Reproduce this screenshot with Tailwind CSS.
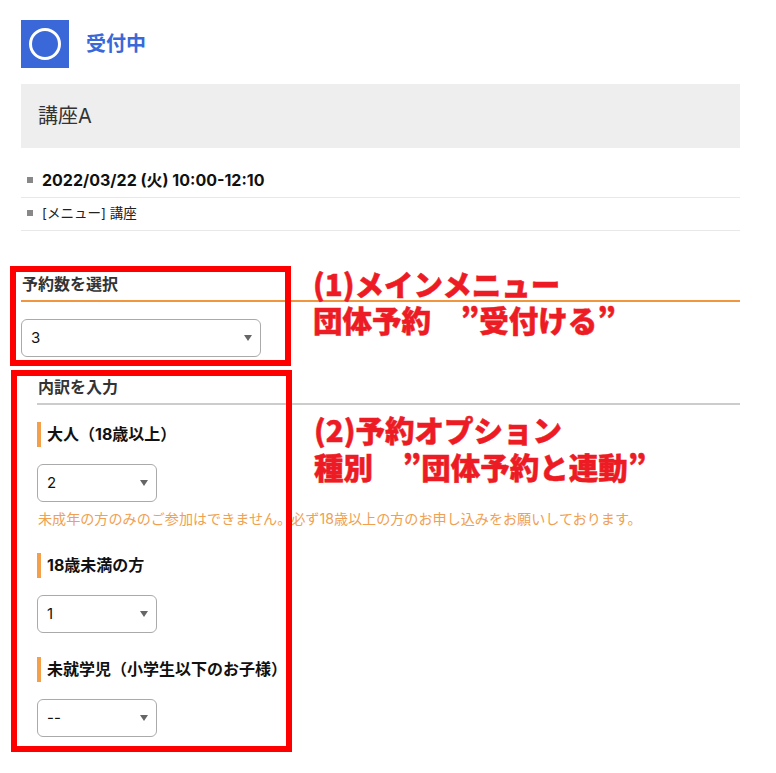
<!DOCTYPE html>
<html lang="ja">
<head>
    <meta charset="UTF-8">
    <meta name="viewport" content="width=device-width, initial-scale=1.0">
    <title>予約</title>
    <script src="https://cdn.jsdelivr.net/npm/@tailwindcss/browser@4"></script>
</head>
<body class="bg-white font-['Inter','Noto_Sans_CJK_JP',sans-serif] text-[#111]">
    <div class="relative h-[773px] overflow-hidden pl-[21px] pr-[36px] pt-[20px]">

        <!-- status -->
        <div class="flex items-center gap-[17px]">
            <div class="flex h-[48px] w-[48px] items-center justify-center bg-[#3a68d8]">
                <div class="h-[32px] w-[32px] rounded-full border-[3px] border-white"></div>
            </div>
            <span class="text-[20px] font-bold text-[#3a68d8]">受付中</span>
        </div>

        <h1 class="mt-[16px] flex h-[64px] items-center bg-[#eeeeee] pl-[17px] text-[20px] text-[#333]">講座A</h1>

        <ul class="mt-[15px]">
            <li class="flex h-[35px] items-center border-b border-[#e8e8e8] pb-[1px] pl-[6px] text-[16px] font-bold">
                <span class="mr-[9px] h-[6px] w-[6px] bg-[#888]"></span>2022/03/22 (火) 10:00-12:10
            </li>
            <li class="flex h-[33px] items-center border-b border-[#e8e8e8] pb-[2px] pl-[6px] text-[13.5px] text-[#222]">
                <span class="mr-[9px] h-[6px] w-[6px] bg-[#888]"></span>[メニュー] 講座
            </li>
        </ul>

        <!-- party size -->
        <h2 class="mt-[41px] h-[30px] border-b-2 border-[#f0963f] pl-[1px] text-[16px] leading-[24px] font-bold text-[#333]">予約数を選択</h2>
        <div class="relative mt-[17px] h-[38px] w-[240px]">
            <select class="h-full w-full appearance-none rounded-[6px] border border-[#aaa] bg-white pl-[9px] text-[15px] text-[#111]"><option>3</option></select>
            <span class="absolute right-[9px] top-[16px] h-0 w-0 border-x-[4px] border-t-[6px] border-x-transparent border-t-[#666]"></span>
        </div>

        <!-- breakdown -->
        <div class="mt-[18px] pl-[16px]">
            <h2 class="h-[30px] border-b-2 border-[#ccc] pl-[1px] text-[16px] leading-[24px] font-bold text-[#333]">内訳を入力</h2>

            <h3 class="mt-[17px] flex h-[25px] items-center border-l-[4px] border-[#f4a04a] pb-[2px] pl-[6px] text-[16px] font-bold">大人（18歳以上）</h3>
            <div class="relative mt-[17px] h-[38px] w-[120px]">
                <select class="h-full w-full appearance-none rounded-[6px] border border-[#aaa] bg-white pl-[9px] text-[15px] text-[#111]"><option>2</option></select>
                <span class="absolute right-[9px] top-[16px] h-0 w-0 border-x-[4px] border-t-[6px] border-x-transparent border-t-[#666]"></span>
            </div>
            <p class="mt-[8px] h-[18px] whitespace-nowrap pl-[1px] text-[14.1px] leading-[18px] text-[#f0a050]">未成年の方のみのご参加はできません。必ず18歳以上の方のお申し込みをお願いしております。</p>

            <h3 class="mt-[25px] flex h-[25px] items-center border-l-[4px] border-[#f4a04a] pb-[2px] pl-[6px] text-[16px] font-bold">18歳未満の方</h3>
            <div class="relative mt-[17px] h-[38px] w-[120px]">
                <select class="h-full w-full appearance-none rounded-[6px] border border-[#aaa] bg-white pl-[9px] text-[15px] text-[#111]"><option>1</option></select>
                <span class="absolute right-[9px] top-[16px] h-0 w-0 border-x-[4px] border-t-[6px] border-x-transparent border-t-[#666]"></span>
            </div>

            <h3 class="mt-[24px] flex h-[25px] items-center border-l-[4px] border-[#f4a04a] pb-[2px] pl-[6px] text-[16px] font-bold whitespace-nowrap">未就学児（小学生以下のお子様）</h3>
            <div class="relative mt-[17px] h-[38px] w-[120px]">
                <select class="h-full w-full appearance-none rounded-[6px] border border-[#aaa] bg-white pl-[9px] text-[15px] text-[#111]"><option>--</option></select>
                <span class="absolute right-[9px] top-[16px] h-0 w-0 border-x-[4px] border-t-[6px] border-x-transparent border-t-[#666]"></span>
            </div>
        </div>

        <!-- annotations drawn over the page -->
        <div class="pointer-events-none absolute left-[10px] top-[266px] h-[100px] w-[281px] border-[6px] border-[#ff0000]"></div>
        <div class="pointer-events-none absolute left-[11px] top-[370px] h-[382px] w-[281px] border-[6px] border-[#ff0000]"></div>

        <div class="absolute left-[313px] top-[265px] text-[29.5px] leading-[36px] font-black whitespace-nowrap text-[#ed1c24] [-webkit-text-stroke:0.5px_#ed1c24] font-['Noto_Sans_CJK_JP',sans-serif]">
            <p>(1)メインメニュー</p>
            <p>団体予約　”受付ける”</p>
        </div>
        <div class="absolute left-[314px] top-[411px] text-[29.5px] leading-[37px] font-black whitespace-nowrap text-[#ed1c24] [-webkit-text-stroke:0.5px_#ed1c24] font-['Noto_Sans_CJK_JP',sans-serif]">
            <p>(2)予約オプション</p>
            <p>種別　”団体予約と連動”</p>
        </div>
    </div>
</body>
</html>
